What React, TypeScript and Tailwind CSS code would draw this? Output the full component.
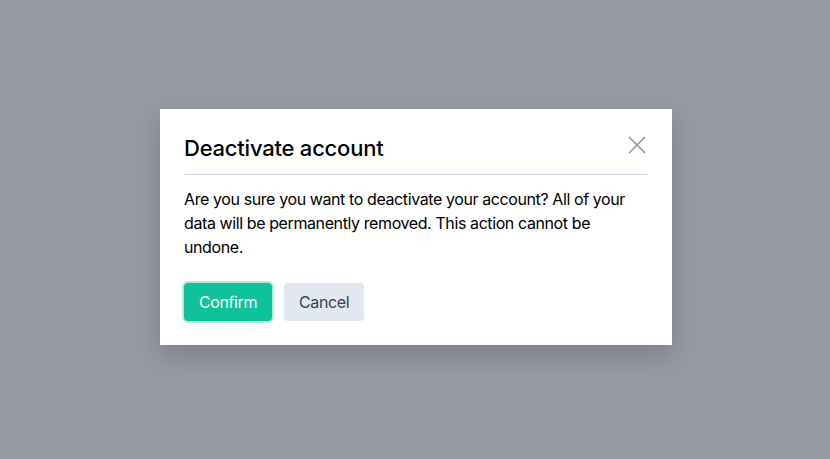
import { X } from "lucide-react";

export default function App() {
  return (
    <div
      className="flex h-[459px] w-[830px] items-center justify-center bg-[#959aa5] pb-1.5 pl-[2px]"
      style={{ fontFamily: "Inter, 'Liberation Sans', sans-serif" }}
    >
      <div className="w-[512px] bg-white px-6 pt-[23px] pb-6 shadow-[0_10px_25px_rgba(0,0,0,0.18)]">
        <div className="flex items-start justify-between border-b border-[#cbd5e1] pb-2.5">
          <h2 className="text-[22px] leading-8 font-medium tracking-[-0.01em] text-black">Deactivate account</h2>
          <button className="-mt-0.5 -mr-1 -mb-2 text-[#8e9aad]">
            <X size={30} strokeWidth={1.4} />
          </button>
        </div>
        <p className="mt-3 text-base leading-6 tracking-[-0.025em] text-black">
          Are you sure you want to deactivate your account? All of your data will be permanently removed. This action
          cannot be undone.
        </p>
        <div className="mt-6 flex gap-3">
          <button className="rounded bg-[#10c29a] px-[15px] py-2 text-base leading-[22px] tracking-[-0.025em] text-white ring-2 ring-[#b4ecdc]">
            Confirm
          </button>
          <button className="rounded bg-[#e2e8f0] px-[15px] py-2 text-base leading-[22px] tracking-[-0.025em] text-[#374151]">
            Cancel
          </button>
        </div>
      </div>
    </div>
  );
}
